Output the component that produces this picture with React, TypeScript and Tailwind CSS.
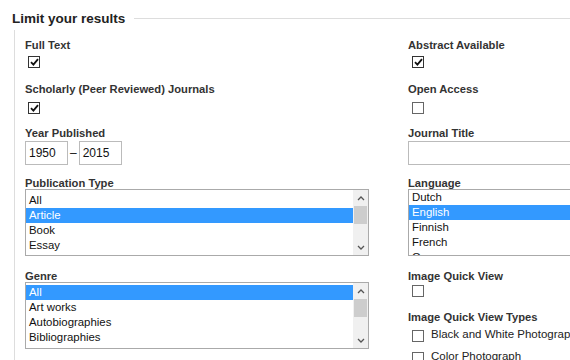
import React from 'react';

const font = { fontFamily: '"Liberation Sans", Arial, sans-serif' };

function Check({ checked = false }: { checked?: boolean }) {
    return (
        <span className={`inline-flex h-[12px] w-[12px] items-center justify-center border bg-white ${checked ? 'border-[#333]' : 'border-[#666]'}`}>
            {checked && (
                <svg width="9" height="8" viewBox="0 0 9 8">
                    <path d="M1 4.2 L3.4 6.6 L8 1.2" stroke="#111" strokeWidth="1.8" fill="none" />
                </svg>
            )}
        </span>
    );
}

function Label({ children }: { children: React.ReactNode }) {
    return <div className="text-[11.2px] font-bold leading-[14px] text-[#333] whitespace-nowrap">{children}</div>;
}

function ListBox({ items, selected, scrollbar = true, padTop = 'pt-[3px]' }: { items: string[]; selected: string; scrollbar?: boolean; padTop?: string }) {
    return (
        <div className="flex h-[67px] border border-[#aaa] bg-white overflow-hidden">
            <div className={`flex-1 flex flex-col ${padTop}`}>
                {items.map((it) => (
                    <div
                        key={it}
                        className={`h-[15px] shrink-0 pl-[3px] text-[11.4px] leading-[15px] whitespace-nowrap ${it === selected ? 'bg-[#3399ff] text-white' : 'text-[#111]'}`}
                    >
                        {it}
                    </div>
                ))}
            </div>
            {scrollbar && (
                <div className="w-[15px] shrink-0 flex flex-col items-center bg-[#f0f0f0]">
                    <div className="h-[16px] flex items-center justify-center">
                        <svg width="8" height="5" viewBox="0 0 8 5"><path d="M1 4 L4 1 L7 4" stroke="#555" strokeWidth="1.3" fill="none" /></svg>
                    </div>
                    <div className="h-[18px] w-[13px] bg-[#cdcdcd]" />
                    <div className="flex-1" />
                    <div className="h-[16px] flex items-center justify-center">
                        <svg width="8" height="5" viewBox="0 0 8 5"><path d="M1 1 L4 4 L7 1" stroke="#555" strokeWidth="1.3" fill="none" /></svg>
                    </div>
                </div>
            )}
        </div>
    );
}

export default function App() {
    return (
        <main className="h-[360px] w-[570px] overflow-hidden bg-white" style={font}>
            {/* legend row */}
            <div className="flex items-center pt-[11px]">
                <span className="pl-[12px] text-[13.5px] font-bold leading-[15px] text-[#222]">Limit your results</span>
                <div className="ml-[9px] flex-1 border-t border-[#ddd]" />
            </div>

            <div className="ml-[14px] mt-[4px] flex gap-[39px] border-l border-[#ddd] pl-[10px] pt-[8px] h-[400px]">
                {/* left column */}
                <div className="w-[344px] shrink-0 flex flex-col">
                    <Label>Full Text</Label>
                    <div className="mt-[4px] pl-[3px] flex"><Check checked /></div>
                    <div className="mt-[14px]"><Label>Scholarly (Peer Reviewed) Journals</Label></div>
                    <div className="mt-[6px] pl-[3px] flex"><Check checked /></div>
                    <div className="mt-[12px]"><Label>Year Published</Label></div>
                    <div className="mt-[1px] flex items-center">
                        <div className="h-[24px] w-[43px] border border-[#bbb] pl-[3px] text-[12px] leading-[22px] text-[#111]">1950</div>
                        <span className="mx-[2px] text-[12px] text-[#111]">–</span>
                        <div className="h-[24px] w-[43px] border border-[#bbb] pl-[3px] text-[12px] leading-[22px] text-[#111]">2015</div>
                    </div>
                    <div className="mt-[11px]"><Label>Publication Type</Label></div>
                    <div className="mt-[-1px]">
                        <ListBox items={['All', 'Article', 'Book', 'Essay']} selected="Article" padTop="pt-[3px]" />
                    </div>
                    <div className="mt-[13px]"><Label>Genre</Label></div>
                    <div className="mt-[-1px]">
                        <ListBox items={['All', 'Art works', 'Autobiographies', 'Bibliographies']} selected="All" padTop="pt-[2px]" />
                    </div>
                </div>

                {/* right column */}
                <div className="w-[200px] shrink-0 flex flex-col">
                    <Label>Abstract Available</Label>
                    <div className="mt-[4px] pl-[4px] flex"><Check checked /></div>
                    <div className="mt-[14px]"><Label>Open Access</Label></div>
                    <div className="mt-[6px] pl-[4px] flex"><Check /></div>
                    <div className="mt-[12px]"><Label>Journal Title</Label></div>
                    <div className="mt-[1px] h-[24px] border border-[#bbb]" />
                    <div className="mt-[11px]"><Label>Language</Label></div>
                    <div className="mt-[-1px]">
                        <ListBox items={['Dutch', 'English', 'Finnish', 'French', 'German']} selected="English" scrollbar={false} padTop="pt-0" />
                    </div>
                    <div className="mt-[13px]"><Label>Image Quick View</Label></div>
                    <div className="mt-[2px] pl-[4px] flex"><Check /></div>
                    <div className="mt-[13px]"><Label>Image Quick View Types</Label></div>
                    <div className="mt-[2px] flex flex-col gap-[5px]">
                        <div className="flex items-center">
                            <span className="ml-[4px] mr-[7px] mt-[3px] flex"><Check /></span>
                            <span className="text-[11.5px] text-[#222] whitespace-nowrap">Black and White Photograph</span>
                        </div>
                        <div className="flex items-center">
                            <span className="ml-[4px] mr-[7px] mt-[3px] flex"><Check /></span>
                            <span className="text-[11.5px] text-[#222] whitespace-nowrap">Color Photograph</span>
                        </div>
                    </div>
                </div>
            </div>
        </main>
    );
}
